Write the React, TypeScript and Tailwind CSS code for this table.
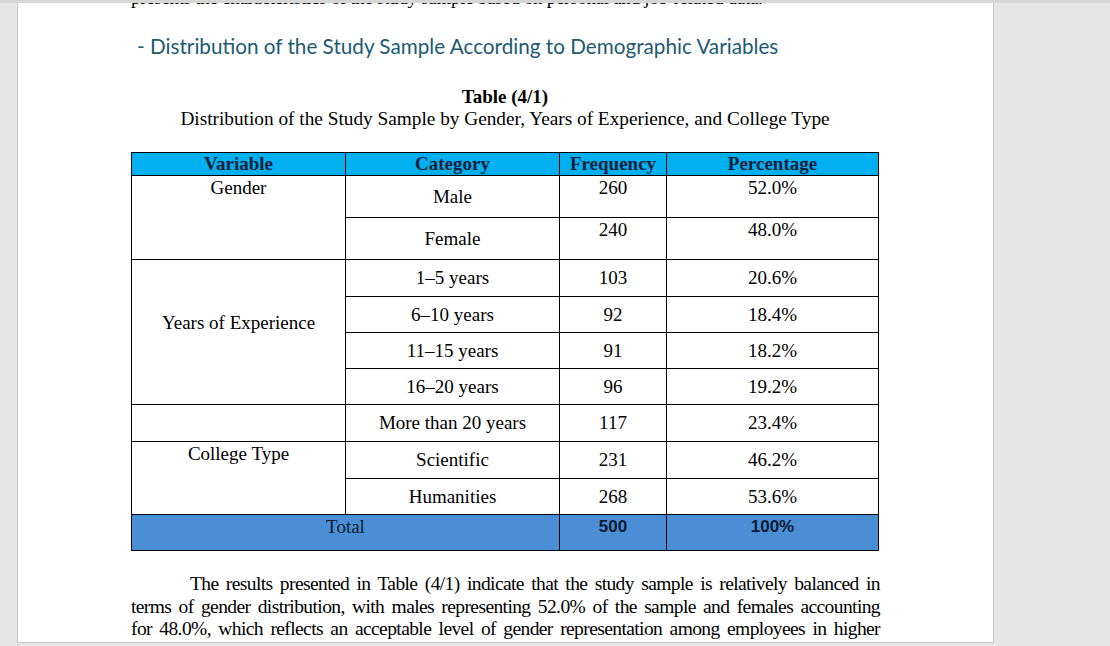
const serif = "font-['Liberation_Serif','Times_New_Roman',serif]";

type Row = {
  variable?: { label: string; span: number; align: "top" | "middle"; pad?: string };
  category: string;
  freq: string;
  pct: string;
  h: string;
  numAlign: "top" | "middle";
};

const rows: Row[] = [
  { variable: { label: "Gender", span: 2, align: "top" }, category: "Male", freq: "260", pct: "52.0%", h: "h-[42px]", numAlign: "top" },
  { category: "Female", freq: "240", pct: "48.0%", h: "h-[42px]", numAlign: "top" },
  { variable: { label: "Years of Experience", span: 4, align: "middle", pad: "pb-[19px]" }, category: "1–5 years", freq: "103", pct: "20.6%", h: "h-[37px]", numAlign: "middle" },
  { category: "6–10 years", freq: "92", pct: "18.4%", h: "h-[36px]", numAlign: "middle" },
  { category: "11–15 years", freq: "91", pct: "18.2%", h: "h-[36px]", numAlign: "middle" },
  { category: "16–20 years", freq: "96", pct: "19.2%", h: "h-[36px]", numAlign: "middle" },
  { variable: { label: "", span: 1, align: "middle" }, category: "More than 20 years", freq: "117", pct: "23.4%", h: "h-[37px]", numAlign: "middle" },
  { variable: { label: "College Type", span: 2, align: "top" }, category: "Scientific", freq: "231", pct: "46.2%", h: "h-[37px]", numAlign: "middle" },
  { category: "Humanities", freq: "268", pct: "53.6%", h: "h-[36px]", numAlign: "middle" },
];

function Cell({ children, align, className = "", rowSpan, colSpan }: { children?: React.ReactNode; align: "top" | "middle"; className?: string; rowSpan?: number; colSpan?: number }) {
  return (
    <td
      rowSpan={rowSpan}
      colSpan={colSpan}
      className={`border border-black p-0 text-center leading-[20px] ${align === "top" ? "align-top pt-[2px]" : "align-middle"} ${className}`}
    >
      {children}
    </td>
  );
}

export default function App() {
  return (
    <div className="w-[1110px] h-[646px] bg-[#e6e6e6] flex flex-col overflow-hidden">
      <div className="h-[3px] shrink-0 bg-[#d6d6d6]" />
      <div className="flex flex-1 min-h-0">
        <div className="w-[17px] shrink-0" />
        <div className={`w-[977px] shrink-0 bg-white border-x border-b border-[#c8c8c8] overflow-hidden text-black ${serif}`}>
          {/* previous line, cut off by the viewport */}
          <div className="h-[7px] overflow-hidden">
            <p className="-mt-[16px] pl-[113px] text-[19px] leading-[22px] whitespace-nowrap tracking-[-0.3px]">
              presents the characteristics of the study sample based on personal and job-related data.
            </p>
          </div>

          <h2 className="mt-[22px] pl-[119px] h-[28px] text-[20.7px] leading-[28px] text-[#1d5a73] font-['Lato','Open_Sans',sans-serif]">
            - Distribution of the Study Sample According to Demographic Variables
          </h2>

          <div className="mt-[26px] w-[748px] ml-[113px] text-center">
            <p className="text-[19px] leading-[22px] font-bold">Table (4/1)</p>
            <p className="text-[19.3px] leading-[22px]">
              Distribution of the Study Sample by Gender, Years of Experience, and College Type
            </p>
          </div>

          <table className="mt-[22px] ml-[113px] w-[747px] table-fixed border-collapse text-[19px]">
            <colgroup>
              <col className="w-[214px]" />
              <col className="w-[214px]" />
              <col className="w-[107px]" />
              <col className="w-[212px]" />
            </colgroup>
            <thead>
              <tr className="h-[23px] bg-[#00b0f0] text-[#0f1d3a]">
                {["Variable", "Category", "Frequency", "Percentage"].map((h) => (
                  <th key={h} className="border border-black p-0 font-bold leading-[20px] align-middle">
                    {h}
                  </th>
                ))}
              </tr>
            </thead>
            <tbody>
              {rows.map((r) => (
                <tr key={r.category} className={r.h}>
                  {r.variable && (
                    <Cell rowSpan={r.variable.span} align={r.variable.align} className={r.variable.pad ?? ""}>
                      {r.variable.label}
                    </Cell>
                  )}
                  <Cell align="middle">{r.category}</Cell>
                  <Cell align={r.numAlign}>{r.freq}</Cell>
                  <Cell align={r.numAlign}>{r.pct}</Cell>
                </tr>
              ))}
              <tr className="h-[36px] bg-[#4a8fd6] text-[#0c1a33]">
                <Cell colSpan={2} align="top">Total</Cell>
                <Cell align="top" className="font-bold text-[17px] font-['Liberation_Sans',Arial,sans-serif]">500</Cell>
                <Cell align="top" className="font-bold text-[17px] font-['Liberation_Sans',Arial,sans-serif]">100%</Cell>
              </tr>
            </tbody>
          </table>

          <div className="mt-[22px] ml-[113px] w-[749px] text-[19.5px] leading-[22.5px] tracking-[-0.6px]">
            <p className="pl-[59px] whitespace-nowrap text-justify [text-align-last:justify]">
              The results presented in Table (4/1) indicate that the study sample is relatively balanced in
            </p>
            <p className="whitespace-nowrap text-justify [text-align-last:justify]">
              terms of gender distribution, with males representing 52.0% of the sample and females accounting
            </p>
            <p className="whitespace-nowrap text-justify [text-align-last:justify]">
              for 48.0%, which reflects an acceptable level of gender representation among employees in higher
            </p>
          </div>
        </div>
      </div>
      <div className="h-[3px] shrink-0" />
    </div>
  );
}
